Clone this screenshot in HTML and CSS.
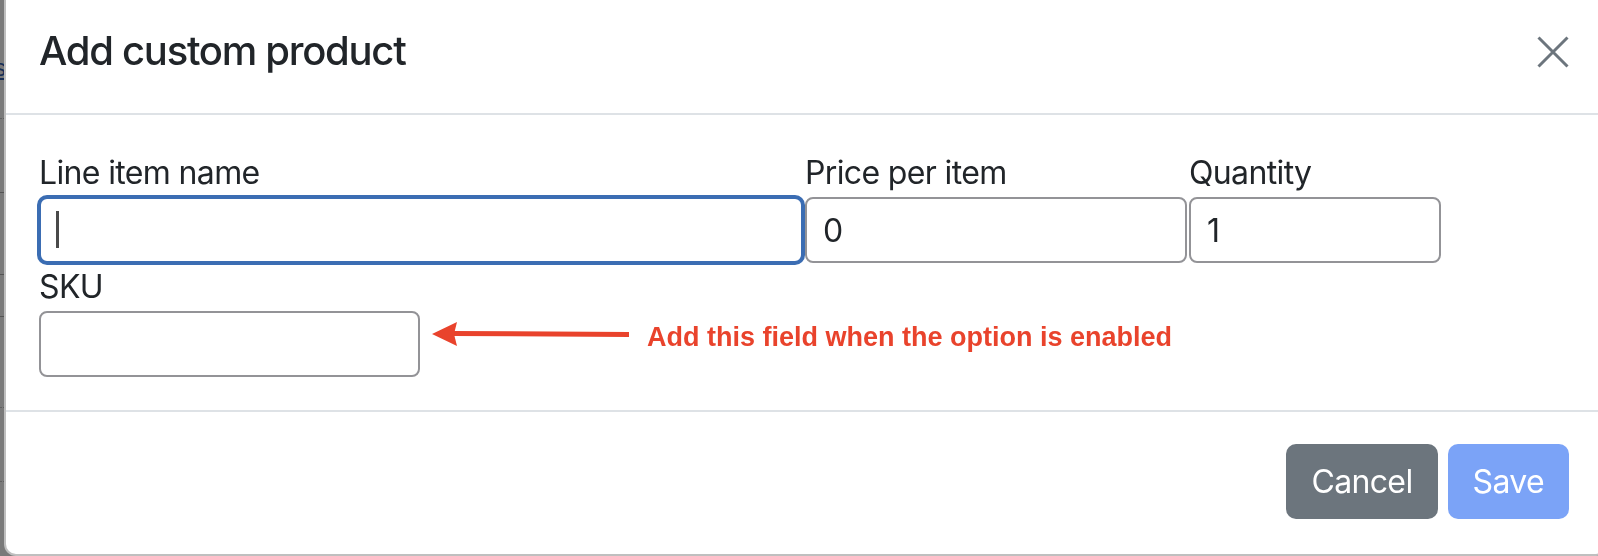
FILE: index.html
```html
<!DOCTYPE html>
<html lang="en">
<head>
    <meta charset="UTF-8">
    <meta name="viewport" content="width=device-width, initial-scale=1.0">
    <title>Add custom product</title>
    <link rel="stylesheet" href="styles.css">
</head>
<body>
    <!-- order page behind the dialog -->
    <div class="page">
        <div class="page-row row-top">
            <a class="page-link" href="#">Edit items</a>
        </div>
        <div class="page-row row-solid row-b"></div>
        <div class="page-row row-solid row-c"></div>
        <div class="page-row row-solid row-d"></div>
        <div class="page-row row-e"></div>
        <div class="page-row row-f"></div>
        <div class="table-head">
            <span class="col-discount">DISCOUNT</span>
            <span class="col-cost">Cost</span>
            <span class="col-qty">Qty</span>
            <span class="col-total">Total</span>
        </div>
    </div>

    <div class="backdrop"></div>

    <div class="modal">
        <div class="modal-header">
            <h5 class="modal-title">Add custom product</h5>
            <button class="btn-close" aria-label="Close">
                <svg width="32" height="32" viewBox="0 0 32 32">
                    <path d="M1.5 1.5 L30.5 30.5 M30.5 1.5 L1.5 30.5" stroke="#6c757d" stroke-width="3" fill="none"/>
                </svg>
            </button>
        </div>

        <div class="modal-body">
            <div class="field-row">
                <div class="field">
                    <label for="itemName">Line item name</label>
                    <div class="input-wrap">
                        <input id="itemName" class="form-control focused" type="text">
                        <span class="caret"></span>
                    </div>
                </div>
                <div class="field">
                    <label for="itemPrice">Price per item</label>
                    <input id="itemPrice" class="form-control" type="text" value="0">
                </div>
                <div class="field">
                    <label for="itemQty">Quantity</label>
                    <input id="itemQty" class="form-control" type="text" value="1">
                </div>
            </div>

            <div class="sku-field">
                <label for="itemSku">SKU</label>
                <div class="sku-line">
                    <input id="itemSku" class="form-control sku-input" type="text">
                    <svg class="note-arrow" width="197" height="26" viewBox="0 0 197 26">
                        <path d="M20 12.5 L197 13.5" stroke="#e9432c" stroke-width="5" fill="none"/>
                        <path d="M0 13 L25 1 L22 13 L25 25 Z" fill="#e9432c"/>
                    </svg>
                    <span class="note-text">Add this field when the option is enabled</span>
                </div>
            </div>
        </div>

        <div class="modal-footer">
            <button class="btn btn-secondary">Cancel</button>
            <button class="btn btn-primary" disabled>Save</button>
        </div>
    </div>
</body>
</html>
```

FILE: styles.css
```css
* {
    box-sizing: border-box;
    margin: 0;
    padding: 0;
}

body {
    font-family: Inter, "Helvetica Neue", Arial, sans-serif;
    color: #212529;
    background-color: white;
    overflow: hidden;
}

/* page behind */

.page {
    font-family: "Liberation Sans", Arial, sans-serif;
}

.page-row {
    border-bottom: 1px dotted #c8c8c8;
}

.row-solid {
    border-bottom: 1px solid #b0b0b0;
}

.row-top {
    height: 119px;
    padding-top: 54px;
}

.row-b { height: 74px; }
.row-c { height: 82px; }
.row-d { height: 42px; }
.row-e { height: 91px; }
.row-f { height: 74px; }

.page-link {
    display: block;
    width: 120px;
    margin-left: -114px;
    text-align: right;
    font-size: 24px;
    color: #2f5fb5;
}

.table-head {
    display: flex;
    margin-top: 57px;
    padding-left: 263px;
    font-size: 26px;
    line-height: 30px;
    color: #777;
}

.col-discount {
    width: 448px;
    font-weight: bold;
    color: #2a2a2a;
}

.col-cost { width: 282px; }
.col-qty { width: 370px; }

.backdrop {
    position: fixed;
    inset: 0;
    background-color: rgba(0, 0, 0, 0.52);
}

/* dialog */

.modal {
    position: fixed;
    top: -20px;
    left: 4px;
    right: -10px;
    background-color: white;
    border: 2px solid rgba(0, 0, 0, 0.25);
    border-radius: 12px;
}

.modal-header {
    display: flex;
    align-items: flex-start;
    height: 133px;
    padding: 45px 37px 0 33px;
    border-bottom: 2px solid #dee2e6;
}

.modal-title {
    font-size: 40px;
    font-weight: 500;
    line-height: 48px;
    letter-spacing: -0.032em;
}

.btn-close {
    margin-left: auto;
    margin-top: 9px;
    width: 32px;
    height: 32px;
    background: none;
    border: none;
}

.btn-close svg {
    display: block;
}

.modal-body {
    padding: 34px 37px 33px 33px;
}

.field-row {
    display: grid;
    grid-template-columns: 764px 382px 252px;
    column-gap: 2px;
}

label {
    display: block;
    font-size: 32px;
    line-height: 48px;
    letter-spacing: -0.02em;
}

.form-control {
    display: block;
    width: 100%;
    height: 66px;
    padding: 0 16px;
    font-family: inherit;
    font-size: 32px;
    color: #212529;
    border: 2px solid #939397;
    border-radius: 8px;
    outline: none;
    background-color: white;
}

.form-control.focused {
    border-color: #3b6db3;
    box-shadow: 0 0 0 2px #3b6db3;
}

.input-wrap {
    position: relative;
}

.caret {
    position: absolute;
    left: 17px;
    top: 14px;
    width: 3px;
    height: 37px;
    background-color: #4a4a4a;
}

.sku-line {
    display: flex;
    align-items: flex-start;
}

.sku-input {
    width: 381px;
    flex: none;
}

.note-arrow {
    flex: none;
    margin: 10px 0 0 12px;
}

.note-text {
    margin: 10px 0 0 18px;
    font-family: "Liberation Sans", Arial, sans-serif;
    font-weight: bold;
    font-size: 27px;
    line-height: 32px;
    color: #e9432c;
    white-space: nowrap;
}

.modal-footer {
    display: flex;
    justify-content: flex-end;
    gap: 10px;
    padding: 32px 37px 35px 33px;
    border-top: 2px solid #dee2e6;
}

.btn {
    height: 75px;
    padding: 0 24px;
    font-family: inherit;
    font-size: 32px;
    letter-spacing: -0.02em;
    color: white;
    border: 1px solid transparent;
    border-radius: 10px;
}

.btn-secondary {
    background-color: #6c757d;
}

.btn-primary {
    background-color: #7ba3f7;
}
```
